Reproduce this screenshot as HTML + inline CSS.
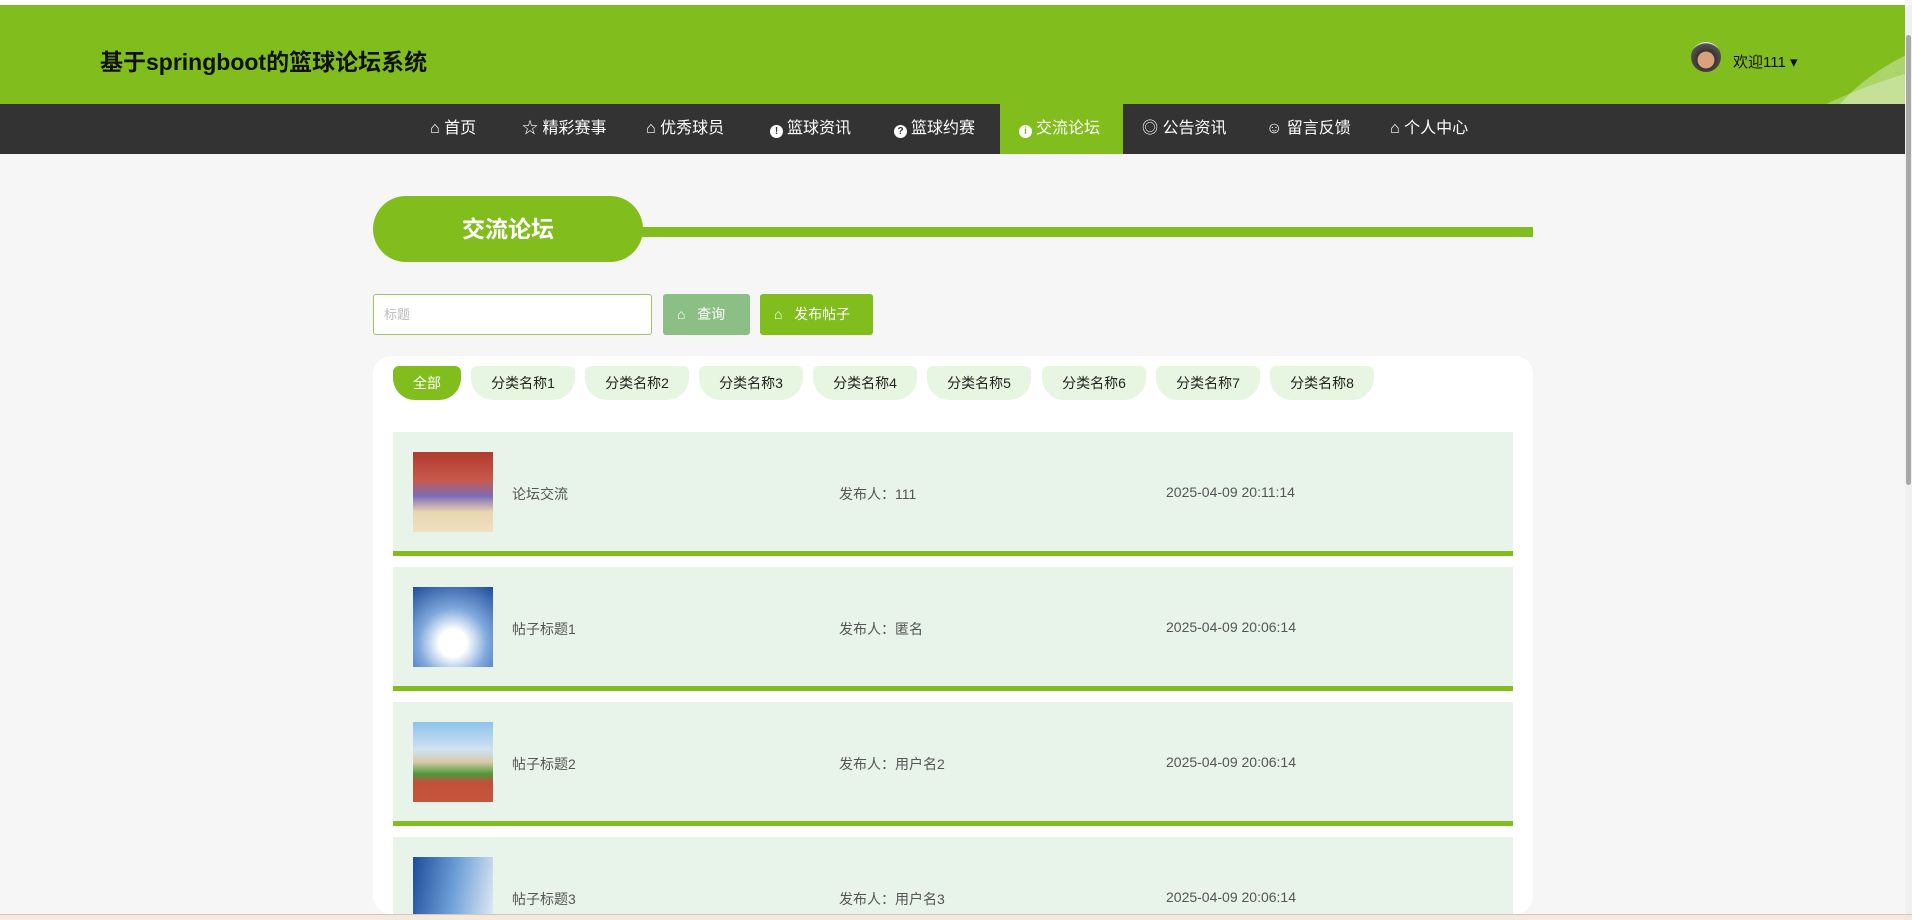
<!DOCTYPE html>
<html><head><meta charset="utf-8">
<style>
*{margin:0;padding:0;box-sizing:border-box}
html{width:1912px;height:920px;overflow:hidden}
body{width:1912px;height:920px;overflow:hidden;background:#f6f6f6;font-family:"Liberation Sans","Noto Sans CJK SC",sans-serif;position:relative}
.top{position:absolute;left:0;top:0;width:1905px;height:5px;background:#fff}
.hdr{position:absolute;left:0;top:5px;width:1905px;height:99px;background:#80bd1d;overflow:hidden}
.hdr h1{position:absolute;left:100px;top:38px;font-size:23px;font-weight:bold;color:#111}
.wave1{position:absolute;left:1700px;top:60px;width:500px;height:200px;border-radius:50%;background:rgba(255,255,255,.3);transform:rotate(-15deg)}
.wave2{position:absolute;left:1800px;top:40px;width:300px;height:200px;border-radius:50%;background:rgba(255,255,255,.35);transform:rotate(-25deg)}
.av{position:absolute;left:1691px;top:37px;width:30px;height:30px;border-radius:50%;background:radial-gradient(circle at 50% 60%,#d9a27d 35%,#3a3330 37%,#555 70%,#ddd 72%)}
.user{position:absolute;left:1733px;top:46px;font-size:15px;color:#111}
.nav{position:absolute;left:0;top:104px;width:1905px;height:50px;background:#333}
.nav a{position:absolute;top:0;height:50px;line-height:50px;color:#fff;font-size:16px;text-decoration:none}
.nav a.on{background:#80bd1d}
.dot{display:inline-block;width:13px;height:13px;border-radius:50%;background:#fff;color:#333;font-size:10px;line-height:13px;text-align:center;font-weight:bold;vertical-align:-1px;margin-right:4px}
.on .dot{color:#80bd1d}
.scroll{position:absolute;left:1905px;top:5px;width:7px;height:910px;background:#f0f0f0}
.scroll i{position:absolute;left:1px;top:30px;width:5px;height:450px;background:#a8a8a8;border-radius:3px}
.pill{position:absolute;left:373px;top:196px;width:270px;height:66px;border-radius:33px;background:#80bd1d;color:#fff;font-size:23px;font-weight:bold;text-align:center;line-height:66px}
.line{position:absolute;left:640px;top:227px;width:893px;height:10px;background:#80bd1d}
.inp{position:absolute;left:373px;top:294px;width:279px;height:41px;border:1px solid #9cc462;background:#fff;border-radius:3px;color:#bbb;font-size:13px;line-height:39px;padding-left:10px}
.btn{position:absolute;top:294px;height:41px;color:#fff;font-size:14px;line-height:41px;border-radius:3px}
.cat{position:absolute;left:373px;top:356px;width:1160px;height:570px;background:#fff;border-radius:18px}
.c{position:absolute;top:366px;height:34px;line-height:34px;font-size:14px;text-align:center;border-radius:6px 6px 22px 22px;background:#e6f6e0;color:#222}
.item{position:absolute;left:393px;width:1120px;height:124px;background:#e8f3e9;border-bottom:5px solid #80bd1d}
.item .im{position:absolute;left:20px;top:20px;width:80px;height:80px}
.item span{position:absolute;top:52px;font-size:14px;color:#555}
.bot{position:absolute;left:0;top:914px;width:1912px;height:6px;background:#f5e8dd;border-top:1px solid #d9c5b8;z-index:5}
</style></head><body>
<div class="top"></div>
<div class="hdr"><div class="wave1"></div><div class="wave2"></div><h1>基于springboot的篮球论坛系统</h1>
<div class="av"></div><div class="user">欢迎111 ▾</div></div>
<div class="nav">
<a style="left:430px">⌂ 首页</a>
<a style="left:522px">☆ 精彩赛事</a>
<a style="left:646px">⌂ 优秀球员</a>
<a style="left:770px"><span class="dot">!</span>篮球资讯</a>
<a style="left:894px"><span class="dot">?</span>篮球约赛</a>
<a class="on" style="left:1000px;width:123px;padding-left:19px"><span class="dot">i</span>交流论坛</a>
<a style="left:1142px">◎ 公告资讯</a>
<a style="left:1266px">☺ 留言反馈</a>
<a style="left:1390px">⌂ 个人中心</a>
</div>
<div class="scroll"><i></i></div>
<div class="pill">交流论坛</div><div class="line"></div>
<div class="inp">标题</div>
<div class="btn" style="left:663px;width:87px;background:#8cbf85;padding-left:14px">⌂ &nbsp;&nbsp;查询</div>
<div class="btn" style="left:760px;width:113px;background:#80bd1d;padding-left:14px">⌂ &nbsp;&nbsp;发布帖子</div>
<div class="cat" style="height:558px"></div>
<div class="c" style="left:393px;width:68px;background:#80bd1d;color:#fff">全部</div>
<div class="c" style="left:471px;width:104px">分类名称1</div>
<div class="c" style="left:585px;width:104px">分类名称2</div>
<div class="c" style="left:699px;width:104px">分类名称3</div>
<div class="c" style="left:813px;width:104px">分类名称4</div>
<div class="c" style="left:927px;width:104px">分类名称5</div>
<div class="c" style="left:1042px;width:104px">分类名称6</div>
<div class="c" style="left:1156px;width:104px">分类名称7</div>
<div class="c" style="left:1270px;width:104px">分类名称8</div>

<div class="item" style="top:432px"><div class="im" style="background:linear-gradient(#b03a2e 0,#c8594a 35%,#7d6cb8 55%,#e8d6b0 75%,#efe0c0)"></div><span style="left:119px">论坛交流</span><span style="left:446px">发布人：111</span><span style="left:773px">2025-04-09 20:11:14</span></div>
<div class="item" style="top:567px"><div class="im" style="background:radial-gradient(circle at 50% 70%,#fff 20%,#7fa8dc 50%,#1e4c9a)"></div><span style="left:119px">帖子标题1</span><span style="left:446px">发布人：匿名</span><span style="left:773px">2025-04-09 20:06:14</span></div>
<div class="item" style="top:702px"><div class="im" style="background:linear-gradient(#8fc3ea 0,#cfe2f0 35%,#d8c9a8 50%,#4c9a3a 65%,#c0503a 75%,#c8553d)"></div><span style="left:119px">帖子标题2</span><span style="left:446px">发布人：用户名2</span><span style="left:773px">2025-04-09 20:06:14</span></div>
<div class="item" style="top:837px;height:80px;border-bottom:0"><div class="im" style="background:linear-gradient(100deg,#1e4c9a,#6fa1d8 50%,#e8eef5)"></div><span style="left:119px">帖子标题3</span><span style="left:446px">发布人：用户名3</span><span style="left:773px">2025-04-09 20:06:14</span></div>
<div class="bot"></div>
</body></html>
